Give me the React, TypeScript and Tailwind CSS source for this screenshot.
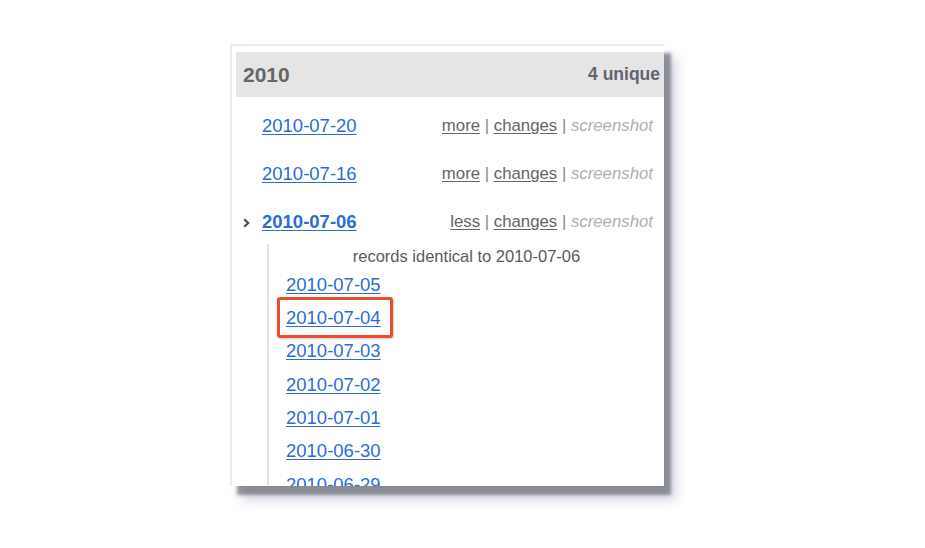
const sans = { fontFamily: '"Liberation Sans", Arial, Helvetica, sans-serif' }

const versions = [
  { date: '2010-07-20', toggle: 'more', open: false },
  { date: '2010-07-16', toggle: 'more', open: false },
  { date: '2010-07-06', toggle: 'less', open: true },
]

const identical = [
  '2010-07-05',
  '2010-07-04',
  '2010-07-03',
  '2010-07-02',
  '2010-07-01',
  '2010-06-30',
  '2010-06-29',
]

function Chevron() {
  return (
    <svg width="7" height="10" viewBox="0 0 7 10" className="block mt-[2px]">
      <path d="M1.2 1.2 L5.2 5 L1.2 8.8" fill="none" stroke="#4a4a4a" strokeWidth="2.2" />
    </svg>
  )
}

export default function App() {
  return (
    <div className="w-[925px] h-[548px] bg-white pt-[44px]" style={sans}>
      <div className="ml-[230px] w-[434px] h-[442px] bg-white border-l-2 border-t-2 border-[#ececec] overflow-hidden shadow-[7px_9px_3px_rgba(90,90,100,0.6),11px_13px_12px_rgba(130,140,165,0.4)]">
        <div className="ml-1 mt-1.5 h-[45px] bg-[#e5e5e5] flex items-center justify-between pl-[7px] pr-1">
          <span className="text-[21px] font-bold text-[#666]">2010</span>
          <span className="text-[17.5px] font-bold text-[#646470]">4 unique</span>
        </div>

        <div className="ml-1 mt-[5px]">
          {versions.map((v) => (
            <div key={v.date} className="h-12 flex items-center pl-[7px] pr-[11px]">
              <div className="w-[19px] flex items-center">{v.open && <Chevron />}</div>
              <a
                href="#"
                className={`text-[18.5px] text-[#2b6dd2] underline underline-offset-2 ${v.open ? 'font-bold' : ''}`}
              >
                {v.date}
              </a>
              <div className="ml-auto text-[16.8px] text-[#666]">
                <a href="#" className="underline underline-offset-2">
                  {v.toggle}
                </a>
                <span className="text-[#888]"> | </span>
                <a href="#" className="underline underline-offset-2">
                  changes
                </a>
                <span className="text-[#888]"> | </span>
                <span className="italic text-[#b0b0b0]">screenshot</span>
              </div>
            </div>
          ))}

          <div className="ml-[31px] -mt-[2px] border-l-2 border-[#e2e2e2] pb-10">
            <div className="h-6 flex items-center justify-center text-[16.5px] text-[#5a5a5a]">
              records identical to 2010-07-06
            </div>
            <div className="pl-[17px]">
              {identical.map((d) => (
                <div key={d} className="h-[33.3px] flex items-center">
                  <a href="#" className="relative text-[18.5px] text-[#2b6dd2] underline underline-offset-2">
                    {d}
                    {d === '2010-07-04' && (
                      <span className="absolute -left-[9px] -right-[12px] -top-[7px] -bottom-[6px] border-[3px] border-[#ee4a2e] rounded-[3px] shadow-[1px_1px_2px_rgba(0,0,0,0.2)]" />
                    )}
                  </a>
                </div>
              ))}
            </div>
          </div>
        </div>
      </div>
    </div>
  )
}
